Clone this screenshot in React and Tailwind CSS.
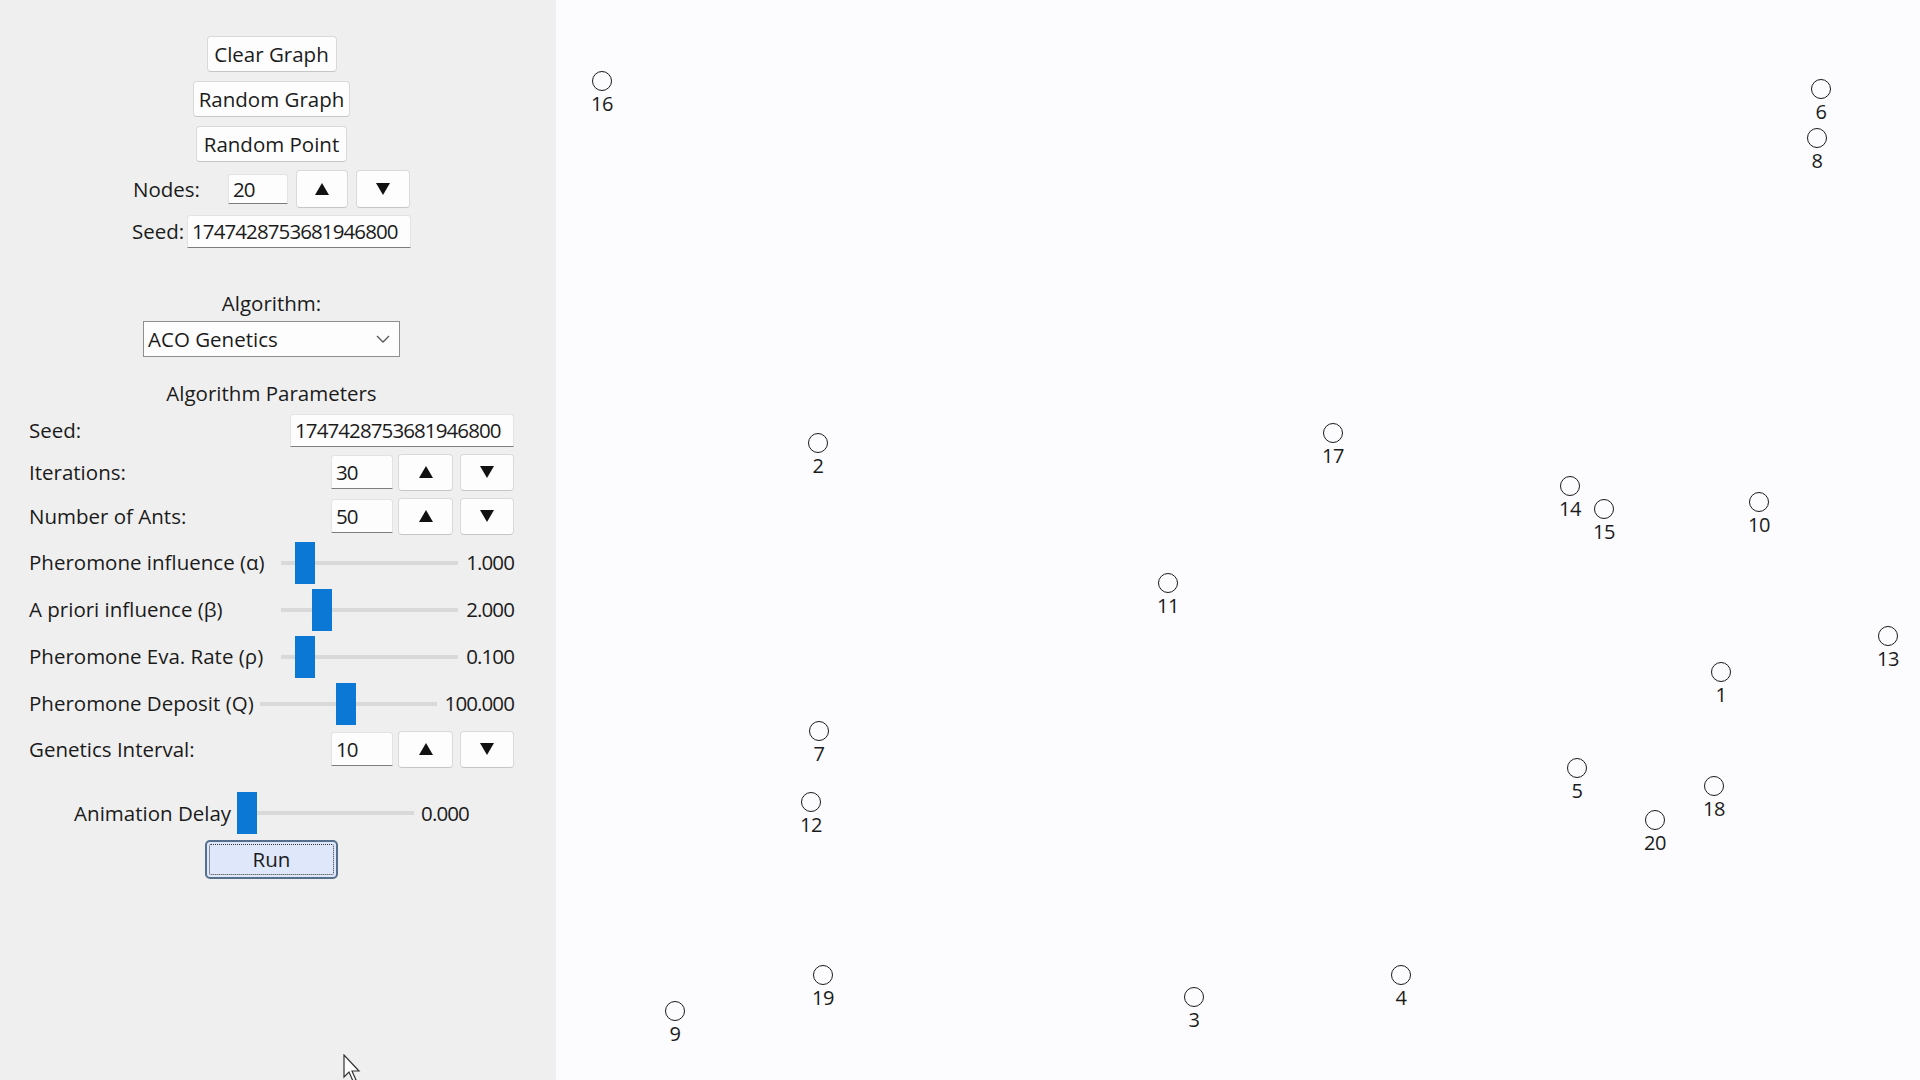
import React from "react";

const NODES = [
  { id: 16, x: 602, y: 81 },
  { id: 6, x: 1821, y: 89 },
  { id: 8, x: 1817, y: 138 },
  { id: 2, x: 818, y: 443 },
  { id: 17, x: 1333, y: 433 },
  { id: 14, x: 1570, y: 486 },
  { id: 15, x: 1604, y: 509 },
  { id: 10, x: 1759, y: 502 },
  { id: 11, x: 1168, y: 583 },
  { id: 13, x: 1888, y: 636 },
  { id: 1, x: 1721, y: 672 },
  { id: 7, x: 819, y: 731 },
  { id: 5, x: 1577, y: 768 },
  { id: 18, x: 1714, y: 786 },
  { id: 12, x: 811, y: 802 },
  { id: 20, x: 1655, y: 820 },
  { id: 19, x: 823, y: 975 },
  { id: 9, x: 675, y: 1011 },
  { id: 3, x: 1194, y: 997 },
  { id: 4, x: 1401, y: 975 },
];

function Btn({ className, children }) {
  return (
    <button
      className={
        "flex items-center justify-center rounded-[4px] border border-[#d9d9d9] border-b-[#c6c6c6] bg-[#fdfdfd] text-[20.5px] leading-[27px] text-[#1b1b1b] " +
        className
      }
    >
      {children}
    </button>
  );
}

function UpTri() {
  return (
    <svg width="14" height="12" viewBox="0 0 14 12">
      <polygon points="7,0 14,12 0,12" fill="#111" />
    </svg>
  );
}

function DownTri() {
  return (
    <svg width="14" height="12" viewBox="0 0 14 12">
      <polygon points="0,0 14,0 7,12" fill="#111" />
    </svg>
  );
}

function TextBox({ className, children }) {
  return (
    <div
      className={
        "flex items-center rounded-t-[3px] border border-[#e3e3e3] border-b-[#7d7d7d] bg-[#fdfdfd] pl-[4px] text-[20.5px] leading-[27px] tracking-[-0.9px] text-[#1b1b1b] " +
        className
      }
    >
      {children}
    </div>
  );
}

function Spinner({ value }) {
  return (
    <div className="flex items-center">
      <TextBox className="h-[34px] w-[62px]">{value}</TextBox>
      <Btn className="ml-[5px] h-[37px] w-[55px]">
        <UpTri />
      </Btn>
      <Btn className="ml-[7px] h-[37px] w-[54px]">
        <DownTri />
      </Btn>
    </div>
  );
}

function Slider({ offset }) {
  return (
    <div className="relative flex h-[42px] w-[177px] items-center">
      <div className="h-[4px] w-full bg-[#d9d9d9]" />
      <div
        className="absolute top-0 h-[42px] w-[20px] bg-[#0a78d4]"
        style={{ left: offset }}
      />
    </div>
  );
}

function SliderRow({ label, offset, value, className }) {
  return (
    <div className={"flex items-center justify-between " + className}>
      <span>{label}</span>
      <div className="flex items-center gap-[8px]">
        <Slider offset={offset} />
        <span className="tracking-[-0.9px]">{value}</span>
      </div>
    </div>
  );
}

export default function App() {
  return (
    <div className="flex h-screen w-full overflow-hidden font-['Open_Sans','Noto_Sans',sans-serif] text-[20.5px] leading-[27px] text-[#1b1b1b]">
      <aside className="relative h-full w-[556px] shrink-0 bg-[#efefef] pl-[29px] pr-[42px]">
        <div className="flex flex-col items-center pt-[36px]">
          <Btn className="h-[36px] w-[130px]">Clear Graph</Btn>
          <Btn className="mt-[9px] h-[36px] w-[157px]">Random Graph</Btn>
          <Btn className="mt-[9px] h-[36px] w-[151px]">Random Point</Btn>
          <div className="mt-[8px] flex h-[38px] items-center">
            <span className="w-[65px]">Nodes:</span>
            <TextBox className="ml-[30px] h-[30px] w-[60px]">20</TextBox>
            <Btn className="ml-[8px] h-[38px] w-[52px]">
              <UpTri />
            </Btn>
            <Btn className="ml-[8px] h-[38px] w-[54px]">
              <DownTri />
            </Btn>
          </div>
          <div className="mt-[7px] flex h-[33px] items-center">
            <span className="w-[51px]">Seed:</span>
            <TextBox className="ml-[4px] h-[33px] w-[224px]">1747428753681946800</TextBox>
          </div>
          <div className="mt-[42px]">Algorithm:</div>
          <div className="mt-[4px] flex h-[36px] w-[257px] items-center justify-between border border-[#8f8f8f] bg-[#fdfdfd] pl-[4px] pr-[9px]">
            <span>ACO Genetics</span>
            <svg width="14" height="9" viewBox="0 0 14 9">
              <polyline points="1,1 7,7 13,1" fill="none" stroke="#555" strokeWidth="1.3" />
            </svg>
          </div>
          <div className="mt-[23px]">Algorithm Parameters</div>
        </div>

        <div className="mt-[2px] flex flex-col">
          <div className="flex h-[42px] items-center justify-between">
            <span>Seed:</span>
            <TextBox className="h-[33px] w-[224px]">1747428753681946800</TextBox>
          </div>
          <div className="flex h-[42px] items-center justify-between">
            <span>Iterations:</span>
            <Spinner value="30" />
          </div>
          <div className="flex h-[46px] items-center justify-between">
            <span>Number of Ants:</span>
            <Spinner value="50" />
          </div>
          <SliderRow className="h-[47px]" label="Pheromone influence (α)" offset={14} value="1.000" />
          <SliderRow className="h-[47px]" label="A priori influence (β)" offset={31} value="2.000" />
          <SliderRow className="h-[47px]" label="Pheromone Eva. Rate (ρ)" offset={14} value="0.100" />
          <SliderRow className="h-[47px]" label="Pheromone Deposit (Q)" offset={76} value="100.000" />
          <div className="flex h-[44px] items-center justify-between">
            <span>Genetics Interval:</span>
            <Spinner value="10" />
          </div>
        </div>

        <div className="mt-[20px] flex h-[44px] items-center justify-center">
          <span>Animation Delay</span>
          <div className="ml-[6px]">
            <Slider offset={0} />
          </div>
          <span className="ml-[7px] tracking-[-0.9px]">0.000</span>
        </div>

        <div className="mt-[5px] flex justify-center">
          <button className="h-[39px] w-[133px] rounded-[5px] border-2 border-[#55708c] bg-[#dfe7fb] p-[2px]">
            <div className="flex h-full w-full items-center justify-center rounded-[2px] border border-dotted border-[#333] text-[20.5px] leading-[27px] text-[#1b1b1b]">
              Run
            </div>
          </button>
        </div>

        <svg
          className="absolute left-[343px] top-[1054px]"
          width="20"
          height="30"
          viewBox="0 0 20 30"
        >
          <path
            d="M1 1 L1 23 L6 18 L10 27 L13 26 L9 17 L16 17 Z"
            fill="#ffffff"
            stroke="#333"
            strokeWidth="1.2"
          />
        </svg>
      </aside>

      <main className="relative h-full flex-1 bg-[#fcfcfe]">
        {NODES.map((n) => (
          <div
            key={n.id}
            className="absolute flex w-[40px] flex-col items-center"
            style={{ left: n.x - 556 - 20, top: n.y - 10 }}
          >
            <div className="h-[20px] w-[20px] rounded-full border-[1.7px] border-[#1a1a1a]" />
            <span className="text-[20px] leading-[26px] tracking-[-0.5px] text-[#1b1b1b]">{n.id}</span>
          </div>
        ))}
      </main>
    </div>
  );
}
